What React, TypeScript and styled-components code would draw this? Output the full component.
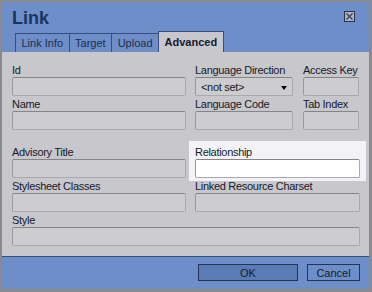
import styled, {createGlobalStyle} from 'styled-components';

////// STYLE >>>>>>>>>>>>>>>>>>>>>>>>>>>>>>>>>>>>>>>>>>>>>>>>>>>>>>>>>>>>>>>>>>>

const colors = {
  frame: '#8a8a8c',
  blue: '#6e8ec9',
  blueDark: '#34507f',
  panel: '#c8c7cc',
  field: '#cdcdcf',
  text: '#141a2a',
  title: '#1b345e',
}

const GlobalStyle = createGlobalStyle`
  html, body {
    margin: 0;
    padding: 0;
    background: ${colors.frame};
  }
  body {
    font-family: "Liberation Sans", Arial, sans-serif;
    font-size: 11px;
  }
`;

const Dialog = styled.div`
  margin: 2px 3px 3px 2px;
  width: 367px;
  height: 287px;
  background: ${colors.blue};
  display: flex;
  flex-direction: column;
`;

const Header = styled.div`
  position: relative;
  padding: 5px 0 0 10px;
`;

const Title = styled.div`
  font-size: 18px;
  font-weight: bold;
  color: ${colors.title};
  line-height: 22px;
  height: 23px;
`;

const CloseButton = styled.div`
  position: absolute;
  right: 14px;
  top: 9px;
  width: 9px;
  height: 9px;
  border: 1px solid #2e3240;
  background: #aab3cc;
  display: flex;
  align-items: center;
  justify-content: center;
`;

const Tabs = styled.div`
  display: flex;
  align-items: flex-end;
  padding-left: 3px;
  height: 22px;
`;

const Tab = styled.div<{ $active?: boolean }>`
  height: ${p => p.$active ? 21 : 19}px;
  box-sizing: border-box;
  border: 1px solid ${colors.blueDark};
  border-bottom: none;
  margin-right: -1px;
  padding: 0 5.5px;
  display: flex;
  align-items: center;
  color: ${p => p.$active ? '#0f1b33' : '#1c2c4c'};
  font-weight: ${p => p.$active ? 'bold' : 'normal'};
  background: ${p => p.$active ? colors.panel : colors.blue};
  position: relative;
  z-index: ${p => p.$active ? 1 : 0};
`;

const Panel = styled.div`
  background: ${colors.panel};
  flex: 1;
  padding: 11px 9px 0 10px;
  border-bottom: 1px solid ${colors.blueDark};
`;

const Grid = styled.div<{ $cols: string }>`
  display: grid;
  grid-template-columns: ${p => p.$cols};
  column-gap: 9px;
`;

const Spacer = styled.div`
  height: 14px;
`;

const Field = styled.div<{ $span?: number, $highlight?: boolean, $gap?: number }>`
  grid-column: span ${p => p.$span || 1};
  display: flex;
  flex-direction: column;
  ${p => p.$highlight && `
    background: #f3f3f7;
    margin: -4px -6px -2px -6px;
    padding: 4px 6px 2px 6px;
  `}
  margin-left: ${p => p.$gap ? `${p.$gap}px` : undefined};
`;

const Label = styled.div`
  height: 14px;
  line-height: 14px;
  color: ${colors.text};
  letter-spacing: -0.3px;
  white-space: nowrap;
`;

const Input = styled.div<{ $white?: boolean }>`
  height: 19px;
  box-sizing: border-box;
  border: 1px solid #a9a9ab;
  border-top-color: #858587;
  border-left-color: #9a9a9c;
  border-radius: 2px;
  background: ${p => p.$white ? '#ffffff' : colors.field};
  margin-bottom: 1px;
`;

const Select = styled(Input)`
  display: flex;
  align-items: center;
  justify-content: space-between;
  padding: 0 5px 0 5px;
  color: ${colors.text};
  letter-spacing: -0.3px;
`;

const Arrow = styled.span`
  width: 0;
  height: 0;
  border-left: 3.5px solid transparent;
  border-right: 3.5px solid transparent;
  border-top: 4px solid #000;
  margin-top: 3px;
`;

const Footer = styled.div`
  height: 32px;
  display: flex;
  justify-content: flex-end;
  align-items: center;
  gap: 9px;
  padding: 0 9px 0 0;
`;

const Button = styled.div<{ $primary?: boolean, $width: number }>`
  width: ${p => p.$width}px;
  height: 17px;
  box-sizing: border-box;
  border: 1px solid #25344f;
  background: ${p => p.$primary ? '#5b7bb4' : colors.blue};
  color: #111a2c;
  display: flex;
  align-items: center;
  justify-content: center;
  font-size: 11px;
  margin-top: -1px;
`;

////// COMPONENT >>>>>>>>>>>>>>>>>>>>>>>>>>>>>>>>>>>>>>>>>>>>>>>>>>>>>>>>>>>>>>>

const tabs = ['Link Info', 'Target', 'Upload', 'Advanced']

const App = () => {
  return (
    <>
      <GlobalStyle />
      <Dialog>
        <Header>
          <Title>Link</Title>
          <CloseButton>
            <svg width="9" height="9" viewBox="0 0 9 9">
              <path d="M1.5 1.5 L7.5 7.5 M7.5 1.5 L1.5 7.5" stroke="#3a3f55" strokeWidth="1.3" />
            </svg>
          </CloseButton>
          <Tabs>
            {tabs.map(t => (
              <Tab key={t} $active={t === 'Advanced'}>{t}</Tab>
            ))}
          </Tabs>
        </Header>
        <Panel>
          <Grid $cols="174px 98px 57px">
            <Field>
              <Label>Id</Label>
              <Input />
            </Field>
            <Field>
              <Label>Language Direction</Label>
              <Select>&lt;not set&gt;<Arrow /></Select>
            </Field>
            <Field $gap={1}>
              <Label>Access Key</Label>
              <Input />
            </Field>
            <Field>
              <Label>Name</Label>
              <Input />
            </Field>
            <Field>
              <Label>Language Code</Label>
              <Input />
            </Field>
            <Field $gap={1}>
              <Label>Tab Index</Label>
              <Input />
            </Field>
          </Grid>
          <Spacer />
          <Grid $cols="174px 165px">
            <Field>
              <Label>Advisory Title</Label>
              <Input />
            </Field>
            <Field $highlight>
              <Label>Relationship</Label>
              <Input $white />
            </Field>
            <Field>
              <Label>Stylesheet Classes</Label>
              <Input />
            </Field>
            <Field>
              <Label>Linked Resource Charset</Label>
              <Input />
            </Field>
            <Field $span={2}>
              <Label>Style</Label>
              <Input />
            </Field>
          </Grid>
        </Panel>
        <Footer>
          <Button $primary $width={100}>OK</Button>
          <Button $width={53}>Cancel</Button>
        </Footer>
      </Dialog>
    </>
  )
}

export default App;
